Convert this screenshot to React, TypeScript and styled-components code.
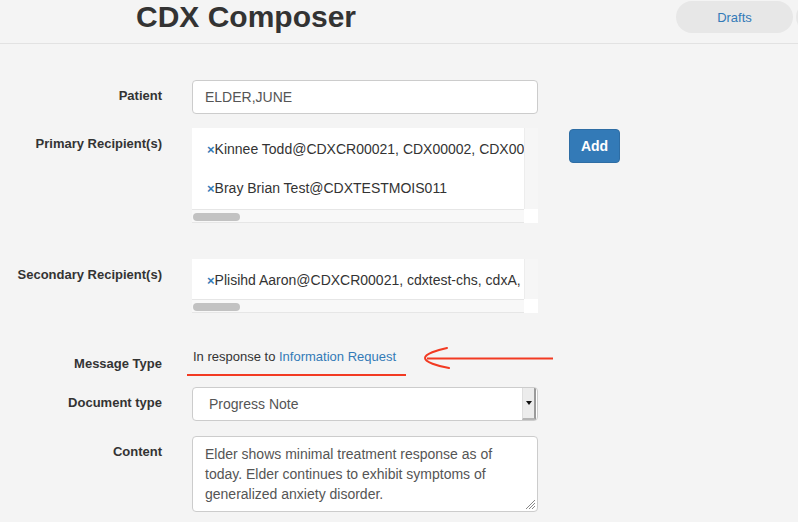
import React from "react";
import styled, { createGlobalStyle } from "styled-components";

const GlobalStyle = createGlobalStyle`
  html, body { margin: 0; padding: 0; background: #f4f4f4; }
  body { font-family: "Liberation Sans", Helvetica, Arial, sans-serif; color: #333; }
  * { box-sizing: border-box; }
`;

const Page = styled.div`
  width: 798px;
  height: 522px;
  overflow: hidden;
  background: #f4f4f4;
`;

const Header = styled.header`
  display: flex;
  height: 44px;
  padding-left: 136px;
  border-bottom: 1px solid #e2e2e2;
  overflow: hidden;
`;

const Title = styled.h1`
  flex: 1;
  margin: 0;
  padding-top: 2px;
  font-size: 30px;
  line-height: 30px;
  font-weight: bold;
  color: #333;
`;

const Nav = styled.nav`
  flex: 0 0 122px;
  min-width: 0;
  display: flex;
  gap: 3px;
  padding-top: 1px;
`;

const Pill = styled.a`
  flex: 0 0 117px;
  height: 32px;
  border-radius: 16px;
  background: #e7e7e7;
  color: #337ab7;
  font-size: 13px;
  display: flex;
  align-items: center;
  justify-content: center;
  text-decoration: none;
`;

const Form = styled.form`
  padding-top: 36px;
`;

const Row = styled.div<{ $mb: number }>`
  display: grid;
  grid-template-columns: 162px 346px auto;
  column-gap: 30px;
  align-items: start;
  margin-bottom: ${(p) => p.$mb}px;
  position: relative;
`;

const Label = styled.label`
  text-align: right;
  font-size: 13px;
  font-weight: bold;
  line-height: 18px;
  padding-top: 7px;
  color: #333;
`;

const TextInput = styled.div`
  height: 34px;
  background: #fff;
  border: 1px solid #ccc;
  border-radius: 4px;
  padding: 0 12px;
  font-size: 14px;
  line-height: 32px;
  color: #555;
`;

const RecipientBox = styled.div<{ $content: number }>`
  display: grid;
  grid-template-columns: 332px 14px;
  grid-template-rows: ${(p) => p.$content}px 14px;
  background: #fff;
`;

const RecipientList = styled.div`
  overflow: hidden;
  background: #fff;
`;

const RecipientItem = styled.div`
  height: 39px;
  padding: 11px 0 8px 15px;
  font-size: 14px;
  line-height: 20px;
  color: #333;
  white-space: nowrap;
  overflow: hidden;
`;

const Remove = styled.span`
  color: #337ab7;
  font-weight: 900;
  font-size: 13px;
`;

const VTrack = styled.div`
  background: #f6f6f6;
  border-left: 1px solid #ededed;
`;

const HTrack = styled.div`
  background: #f8f8f8;
  border-top: 1px solid #e6e6e6;
  border-bottom: 1px solid #e6e6e6;
  padding: 3px 0 0 1px;
`;

const Thumb = styled.div`
  width: 47px;
  height: 8px;
  border-radius: 4px;
  background: #c2c2c2;
`;

const Corner = styled.div`
  background: #fff;
`;

const AddButton = styled.button`
  margin-left: 1px;
  margin-top: 1px;
  width: 51px;
  height: 34px;
  background: #337ab7;
  border: 1px solid #2e6da4;
  border-radius: 4px;
  color: #fff;
  font-family: inherit;
  font-size: 14px;
  font-weight: bold;
  padding: 0;
`;

const MessageValue = styled.div`
  font-size: 13px;
  line-height: 18px;
  padding-left: 1px;
  color: #333;
`;

const Link = styled.a`
  color: #337ab7;
  text-decoration: none;
`;

const Annotation = styled.svg`
  position: absolute;
  left: 185px;
  top: -4px;
  overflow: visible;
  pointer-events: none;
`;

const Select = styled.div`
  height: 34px;
  display: flex;
  background: #fff;
  border: 1px solid #ccc;
  border-radius: 4px;
  overflow: hidden;
`;

const SelectText = styled.div`
  flex: 1;
  padding-left: 16px;
  font-size: 14px;
  line-height: 32px;
  color: #555;
`;

const SelectButton = styled.div`
  flex: 0 0 14px;
  margin: 0 1px 0 0;
  background: #ececec;
  border-left: 1px solid #dedede;
  border-right: 2px solid #9a9a9a;
  border-bottom: 2px solid #b5b5b5;
  display: flex;
  align-items: center;
  justify-content: center;
  &::after {
    content: "";
    border-left: 3px solid transparent;
    border-right: 3px solid transparent;
    border-top: 4px solid #111;
  }
`;

const TextArea = styled.div`
  position: relative;
  height: 76px;
  background: #fff;
  border: 1px solid #ccc;
  border-radius: 4px;
  padding: 7px 12px;
  font-size: 14px;
  line-height: 20px;
  color: #555;
  white-space: pre-line;
`;

const Grip = styled.svg`
  position: absolute;
  right: 1px;
  bottom: 1px;
`;

const recipientsPrimary = [
  "Kinnee Todd@CDXCR00021, CDX00002, CDX00003",
  "Bray Brian Test@CDXTESTMOIS011",
];

const recipientsSecondary = ["Plisihd Aaron@CDXCR00021, cdxtest-chs, cdxA, cdxB"];

function Recipients({ items, content }: { items: string[]; content: number }) {
  return (
    <RecipientBox $content={content}>
      <RecipientList>
        {items.map((r) => (
          <RecipientItem key={r}>
            <Remove>×</Remove>
            {r}
          </RecipientItem>
        ))}
      </RecipientList>
      <VTrack />
      <HTrack>
        <Thumb />
      </HTrack>
      <Corner />
    </RecipientBox>
  );
}

export default function App() {
  return (
    <Page>
      <GlobalStyle />
      <Header>
        <Title>CDX Composer</Title>
        <Nav>
          <Pill>Drafts</Pill>
          <Pill aria-hidden="true" />
        </Nav>
      </Header>
      <Form>
        <Row $mb={14}>
          <Label>Patient</Label>
          <TextInput>ELDER,JUNE</TextInput>
        </Row>
        <Row $mb={36}>
          <Label>Primary Recipient(s)</Label>
          <Recipients items={recipientsPrimary} content={81} />
          <AddButton type="button">Add</AddButton>
        </Row>
        <Row $mb={35}>
          <Label>Secondary Recipient(s)</Label>
          <Recipients items={recipientsSecondary} content={40} />
        </Row>
        <Row $mb={14}>
          <Label>Message Type</Label>
          <MessageValue>
            In response to <Link>Information Request</Link>
          </MessageValue>
          <Annotation width="380" height="40" viewBox="0 0 380 40">
            <line x1="2" y1="31" x2="221" y2="31" stroke="#f23a22" strokeWidth="2" />
            <path
              d="M262 4 C 252 6, 240 10, 240 14 C 240 18, 252 22, 264 24"
              fill="none"
              stroke="#f23a22"
              strokeWidth="2"
              strokeLinecap="round"
            />
            <line x1="242" y1="14.5" x2="368" y2="14.5" stroke="#f23a22" strokeWidth="2" />
          </Annotation>
        </Row>
        <Row $mb={15}>
          <Label>Document type</Label>
          <Select>
            <SelectText>Progress Note</SelectText>
            <SelectButton />
          </Select>
        </Row>
        <Row $mb={0}>
          <Label>Content</Label>
          <TextArea>
            {"Elder shows minimal treatment response as of\ntoday. Elder continues to exhibit symptoms of\ngeneralized anxiety disorder."}
            <Grip width="12" height="12" viewBox="0 0 12 12">
              <path d="M11 2 L2 11 M11 5 L5 11 M11 8 L8 11" stroke="#888" strokeWidth="1" />
            </Grip>
          </TextArea>
        </Row>
      </Form>
    </Page>
  );
}
